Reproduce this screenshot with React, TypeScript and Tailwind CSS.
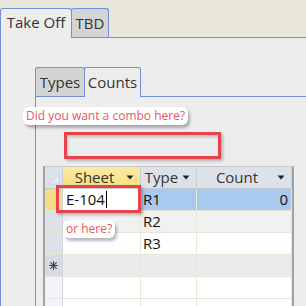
import { ReactNode } from 'react'

const BLUE = 'border-[#7090D8]'

function Arrow() {
  return (
    <svg width="8" height="5" viewBox="0 0 8 5" className="shrink-0">
      <path d="M0.5 0.5h7L4 4.5z" fill="#222" />
    </svg>
  )
}

function Asterisk() {
  return (
    <svg width="9" height="9" viewBox="0 0 9 9">
      <g stroke="#444" strokeWidth="1.1" strokeLinecap="round">
        <path d="M4.5 0.5v8M0.5 4.5h8M1.7 1.7l5.6 5.6M7.3 1.7l-5.6 5.6" />
      </g>
    </svg>
  )
}

function HeadCell({ w, label, active }: { w: string; label: string; active?: boolean }) {
  return (
    <div
      className={`${w} h-full flex items-center border-r border-[#C9CED6] ${
        active ? 'bg-gradient-to-b from-[#FBEBA2] to-[#F6DF7E]' : 'bg-[#DDE2E9]'
      }`}
    >
      <span className="flex-1 text-center text-[15px] text-[#333]">{label}</span>
      <span className="pr-[6px]">
        <Arrow />
      </span>
    </div>
  )
}

function Row({
  sel,
  bg,
  mark,
  children,
}: {
  sel: string
  bg: string
  mark?: ReactNode
  children?: ReactNode
}) {
  return (
    <div className={`flex h-[22px] border-b border-[#E6E6D6] ${bg}`}>
      <div className={`w-[18px] h-full border-r border-[#D0D4DB] ${sel} flex items-center justify-center`}>
        {mark}
      </div>
      {children}
    </div>
  )
}

function Cell({ w, children, className = '' }: { w: string; children?: ReactNode; className?: string }) {
  return (
    <div className={`${w} h-full border-r border-[#E8E8DA] flex items-center text-[15px] text-[#111] ${className}`}>
      {children}
    </div>
  )
}

function Datasheet() {
  return (
    <div className="ml-[7px] w-[251px] border-l-2 border-r-2 border-[#A3A3A3] border-t border-t-[#C8C8C8] bg-white">
      <div className="flex h-[22px] border-b border-[#C2C7CF]">
        <div className="w-[18px] h-full border-r border-[#C9CED6] bg-[#DDE2E9] relative">
          <svg width="12" height="12" viewBox="0 0 12 12" className="absolute right-[2px] bottom-[3px]">
            <path d="M11 1 L1 11 H11 Z" fill="#E6E9EE" stroke="#C4C8CF" strokeWidth="0.6" />
          </svg>
        </div>
        <HeadCell w="w-[78px]" label="Sheet" active />
        <HeadCell w="w-[56px]" label="Type" />
        <HeadCell w="w-[95px]" label="Count" />
      </div>
      <Row sel="bg-[#F5DE84]" bg="bg-[#A9C9EE]">
        <Cell w="w-[78px]" className="bg-white pl-[3px]">
          E-104<span className="inline-block w-px h-[17px] bg-black ml-px" />
        </Cell>
        <Cell w="w-[56px]" className="pl-[2px]">R1</Cell>
        <Cell w="w-[95px]" className="justify-end pr-[3px]">0</Cell>
      </Row>
      <Row sel="bg-[#DDE1E8]" bg="bg-[#F1F1F1]">
        <Cell w="w-[78px]" />
        <Cell w="w-[56px]" className="pl-[2px]">R2</Cell>
        <Cell w="w-[95px]" />
      </Row>
      <Row sel="bg-[#DDE1E8]" bg="bg-white">
        <Cell w="w-[78px]" />
        <Cell w="w-[56px]" className="pl-[2px]">R3</Cell>
        <Cell w="w-[95px]" />
      </Row>
      <Row sel="bg-[#D6DAE2]" bg="bg-[#EBEBEB]" mark={<Asterisk />}>
        <Cell w="w-[78px]" />
        <Cell w="w-[56px]" />
        <Cell w="w-[95px]" />
      </Row>
      <Row sel="bg-[#F4F3FB]" bg="bg-white">
        <Cell w="w-[78px]" />
        <Cell w="w-[56px]" />
        <Cell w="w-[95px]" />
      </Row>
      <Row sel="bg-[#F4F3FB]" bg="bg-white">
        <Cell w="w-[78px]" />
        <Cell w="w-[56px]" />
        <Cell w="w-[95px]" />
      </Row>
    </div>
  )
}

function Callout({ className, children }: { className: string; children: ReactNode }) {
  return (
    <div
      className={`absolute bg-white rounded-[6px] px-[3px] h-[18px] flex items-center text-[12px] text-[#EC5560] font-['Open_Sans',sans-serif] shadow-[2px_3px_3px_rgba(0,0,0,0.28)] ${className}`}
    >
      {children}
    </div>
  )
}

export default function App() {
  return (
    <div className="relative w-[306px] h-[306px] overflow-hidden bg-[#E9E8DA] font-['Open_Sans',sans-serif] text-[#333]">
      <div className={`flex items-end h-[38px] pt-[8px] border-b ${BLUE}`}>
        <div className={`relative z-10 -mb-px h-[30px] w-[72px] flex items-center justify-center text-[15px] bg-[#EDEDED] border border-b-0 ${BLUE} rounded-t-[3px] pb-[2px]`}>
          Take Off
        </div>
        <div className={`-ml-px h-[29px] w-[38px] flex items-center justify-center text-[15px] bg-[#D4D4D4] border border-b-0 ${BLUE} rounded-t-[3px]`}>
          TBD
        </div>
      </div>

      <div className={`h-[268px] bg-[#EDEDED] border-l ${BLUE} pl-[34px] pt-[29px] flex flex-col`}>
        <div className={`flex items-end h-[30px] border-b ${BLUE}`}>
          <div className={`h-[29px] w-[50px] flex items-center justify-center text-[15px] bg-[#D4D4D4] border border-b-0 ${BLUE} rounded-t-[3px]`}>
            Types
          </div>
          <div className={`relative z-10 -ml-px -mb-px h-[30px] w-[57px] flex items-center justify-center text-[15px] bg-[#EDEDED] border border-b-0 ${BLUE} rounded-t-[3px] pb-[1px]`}>
            Counts
          </div>
        </div>
        <div className={`flex-1 border-l ${BLUE} pt-[69px]`}>
          <Datasheet />
        </div>
      </div>

      <Callout className="left-[23px] top-[107px]">Did you want a combo here?</Callout>
      <div className="absolute left-[64px] top-[132px] w-[157px] h-[27px] border-[3px] border-[#E8434B] shadow-[2px_2px_3px_rgba(0,0,0,0.25),inset_1px_2px_3px_rgba(0,0,0,0.2)]" />
      <div className="absolute left-[56px] top-[185px] w-[85px] h-[28px] border-[3px] border-[#E8434B] shadow-[2px_2px_3px_rgba(0,0,0,0.25)]" />
      <Callout className="left-[63px] top-[220px]">or here?</Callout>
    </div>
  )
}
